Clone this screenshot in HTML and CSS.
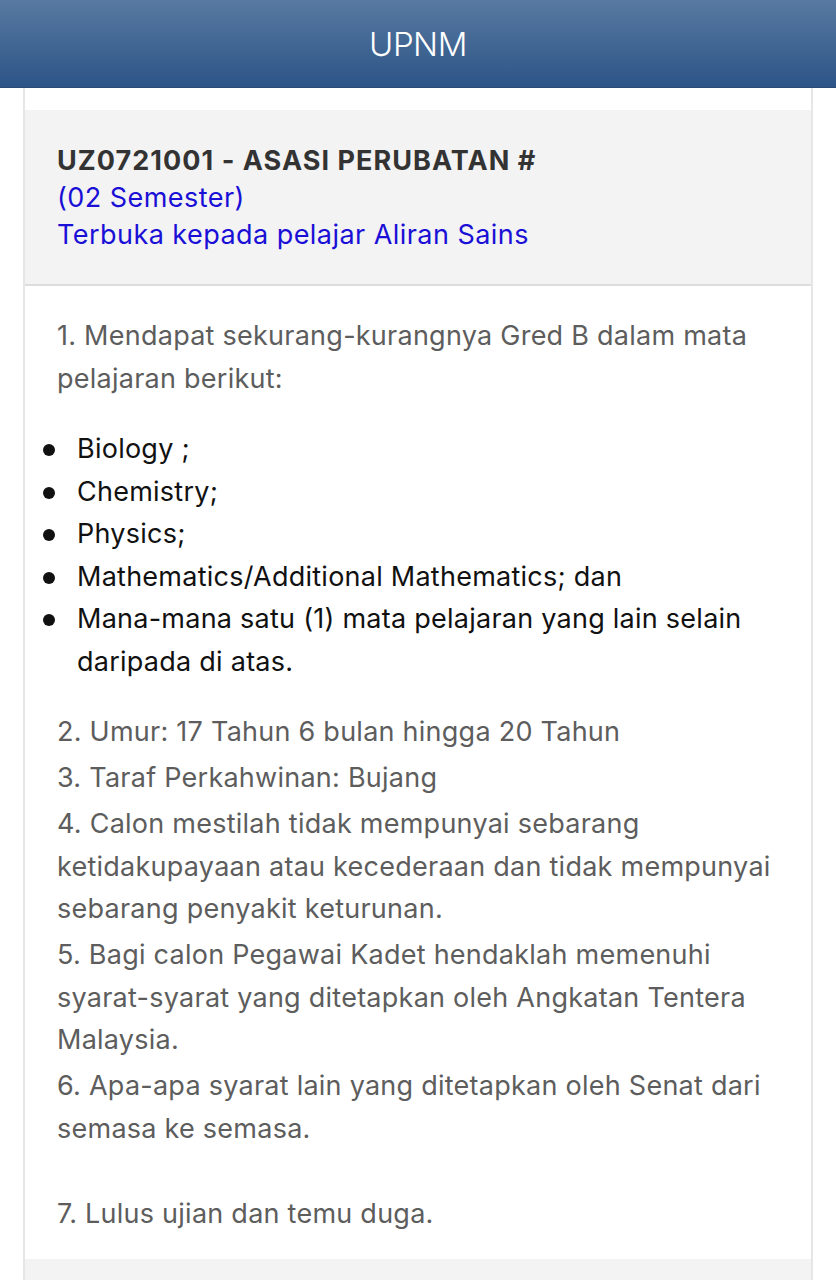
FILE: index.html
```html
<!DOCTYPE html>
<html lang="ms">
<head>
<meta charset="utf-8">
<title>UPNM</title>
<link rel="stylesheet" href="styles.css">
</head>
<body>
<header class="topbar">UPNM</header>
<main class="card">
  <div class="card-gap"></div>
  <section class="course-head">
    <div class="course-code">UZ0721001 - ASASI PERUBATAN #</div>
    <div class="course-note">(02 Semester)</div>
    <div class="course-note">Terbuka kepada pelajar Aliran Sains</div>
  </section>
  <section class="course-body">
    <p class="req">1. Mendapat sekurang-kurangnya Gred B dalam mata pelajaran berikut:</p>
    <ul class="subjects">
      <li><span>Biology ;</span></li>
      <li><span>Chemistry;</span></li>
      <li><span>Physics;</span></li>
      <li><span>Mathematics/Additional Mathematics; dan</span></li>
      <li><span>Mana-mana satu (1) mata pelajaran yang lain selain daripada di atas.</span></li>
    </ul>
    <p class="req">2. Umur: 17 Tahun 6 bulan hingga 20 Tahun</p>
    <p class="req">3. Taraf Perkahwinan: Bujang</p>
    <p class="req">4. Calon mestilah tidak mempunyai sebarang ketidakupayaan atau kecederaan dan tidak mempunyai sebarang penyakit keturunan.</p>
    <p class="req">5. Bagi calon Pegawai Kadet hendaklah memenuhi syarat-syarat yang ditetapkan oleh Angkatan Tentera Malaysia.</p>
    <p class="req">6. Apa-apa syarat lain yang ditetapkan oleh Senat dari semasa ke semasa.<br><br>7. Lulus ujian dan temu duga.</p>
  </section>
  <div class="card-next"></div>
</main>
</body>
</html>
```

FILE: styles.css
```css
html, body {
  margin: 0;
  padding: 0;
  background: #ffffff;
  font-family: Inter, "Noto Sans", "Liberation Sans", sans-serif;
}

.topbar {
  height: 87px;
  border-bottom: 1px solid #2a4a74;
  background: linear-gradient(#587aa1, #2c5487);
  color: #ffffff;
  font-size: 33px;
  font-weight: 300;
  display: flex;
  align-items: center;
  justify-content: center;
  letter-spacing: -0.5px;
}

.card {
  margin: 0 23px;
  border-left: 2px solid #e6e6e6;
  border-right: 2px solid #e6e6e6;
}

.card-gap {
  height: 22px;
  background: #ffffff;
}

.course-head {
  background: #f3f3f3;
  border-bottom: 2px solid #dddddd;
  padding: 32px 32px 31px 32px;
  font-size: 27px;
  line-height: 37px;
}

.course-code {
  color: #333333;
  font-weight: 700;
  letter-spacing: 1.05px;
}

.course-note {
  color: #1a0fd6;
  letter-spacing: 0.45px;
}

.course-body {
  padding: 29px 32px 20px 32px;
  font-size: 27px;
  line-height: 42.5px;
  letter-spacing: 0.25px;
}

.req {
  margin: 0 0 3.5px 0;
  color: #5d5d5d;
}

.subjects {
  list-style: none;
  margin: 28px 0 28px 0;
  padding: 0 0 0 20px;
  color: #111111;
}

.subjects li {
  display: flex;
  align-items: flex-start;
}

.subjects li::before {
  content: "";
  flex: 0 0 12px;
  width: 12px;
  height: 12px;
  margin: 16px 22px 0 -34px;
  border-radius: 50%;
  background: #111111;
}

.card-next {
  height: 40px;
  background: #f3f3f3;
}
```
